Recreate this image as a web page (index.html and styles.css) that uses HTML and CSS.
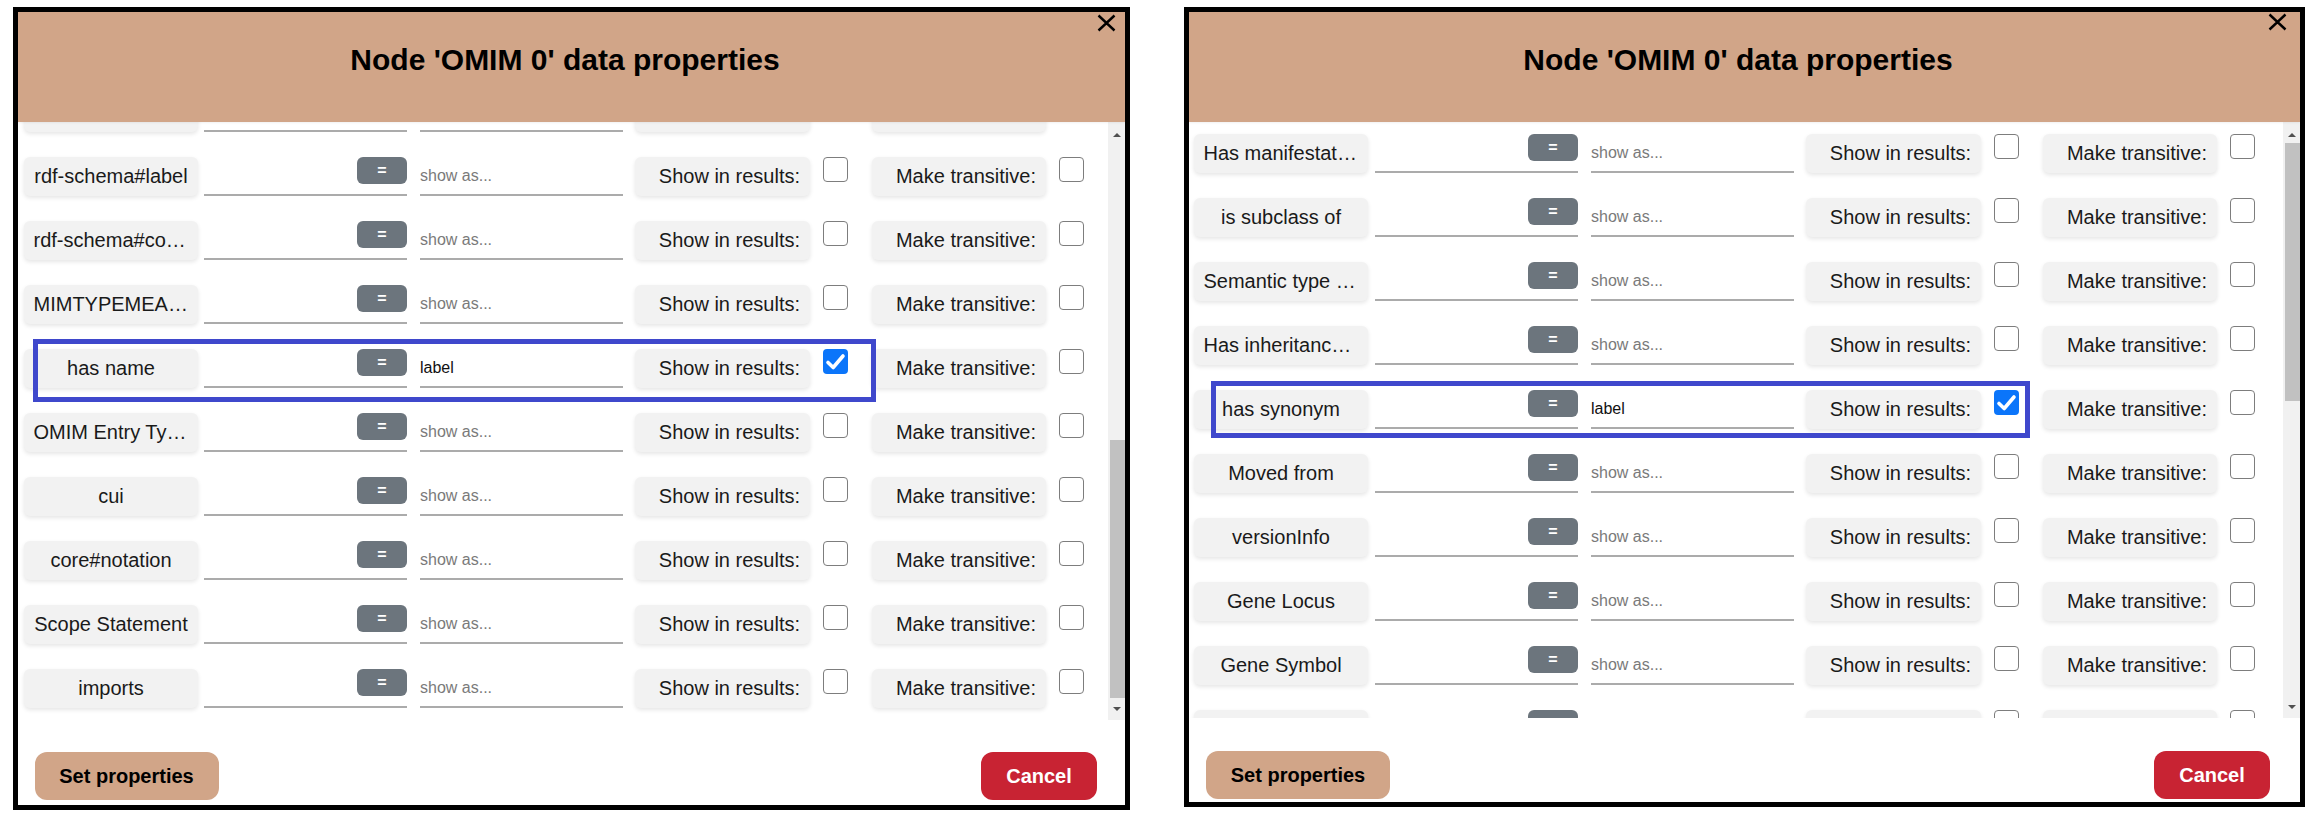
FILE: index.html
```html
<!DOCTYPE html>
<html lang="en">
<head>
<meta charset="utf-8">
<title>Node data properties</title>
<link rel="stylesheet" href="styles.css">
</head>
<body>
<div class="stage">

  <section class="dialog dialog--a">
    <header class="dialog-head">
      <h2 class="dialog-title">Node 'OMIM 0' data properties</h2>
      <button class="close-btn" aria-label="Close"><svg viewBox="0 0 19 18" width="19" height="18"><path d="M1.5 1.5 L17.5 16.5 M17.5 1.5 L1.5 16.5" stroke="#000" stroke-width="2.4" fill="none"/></svg></button>
    </header>
    <div class="dialog-body dialog-body--a">
      <div class="prop-list">
        <div class="rows rows--scrolled">
          <div class="prop-row prop-row--clipped"><span class="prop-name"></span><div class="cond"><input class="cond-input" type="text"><button class="eq-btn"></button></div><input class="show-as" type="text"><span class="opt opt--show"></span><span class="check check--a"></span><span class="opt opt--trans"></span><span class="check check--b"></span></div>
          <div class="prop-row"><span class="prop-name">rdf-schema#label</span><div class="cond"><input class="cond-input" type="text"><button class="eq-btn">=</button></div><input class="show-as" type="text" placeholder="show as..."><span class="opt opt--show">Show in results:</span><span class="check check--a"></span><span class="opt opt--trans">Make transitive:</span><span class="check check--b"></span></div>
          <div class="prop-row"><span class="prop-name">rdf-schema#comment</span><div class="cond"><input class="cond-input" type="text"><button class="eq-btn">=</button></div><input class="show-as" type="text" placeholder="show as..."><span class="opt opt--show">Show in results:</span><span class="check check--a"></span><span class="opt opt--trans">Make transitive:</span><span class="check check--b"></span></div>
          <div class="prop-row"><span class="prop-name">MIMTYPEMEANING</span><div class="cond"><input class="cond-input" type="text"><button class="eq-btn">=</button></div><input class="show-as" type="text" placeholder="show as..."><span class="opt opt--show">Show in results:</span><span class="check check--a"></span><span class="opt opt--trans">Make transitive:</span><span class="check check--b"></span></div>
          <div class="prop-row"><span class="prop-name">has name</span><div class="cond"><input class="cond-input" type="text"><button class="eq-btn">=</button></div><input class="show-as" type="text" placeholder="show as..." value="label"><span class="opt opt--show">Show in results:</span><span class="check check--a is-checked"><svg viewBox="0 0 25 25" width="25" height="25"><path d="M5 13.5 L10.2 18.5 L20 7" stroke="#fff" stroke-width="3.6" fill="none" stroke-linecap="round" stroke-linejoin="round"/></svg></span><span class="opt opt--trans">Make transitive:</span><span class="check check--b"></span></div>
          <div class="prop-row"><span class="prop-name">OMIM Entry Type</span><div class="cond"><input class="cond-input" type="text"><button class="eq-btn">=</button></div><input class="show-as" type="text" placeholder="show as..."><span class="opt opt--show">Show in results:</span><span class="check check--a"></span><span class="opt opt--trans">Make transitive:</span><span class="check check--b"></span></div>
          <div class="prop-row"><span class="prop-name">cui</span><div class="cond"><input class="cond-input" type="text"><button class="eq-btn">=</button></div><input class="show-as" type="text" placeholder="show as..."><span class="opt opt--show">Show in results:</span><span class="check check--a"></span><span class="opt opt--trans">Make transitive:</span><span class="check check--b"></span></div>
          <div class="prop-row"><span class="prop-name">core#notation</span><div class="cond"><input class="cond-input" type="text"><button class="eq-btn">=</button></div><input class="show-as" type="text" placeholder="show as..."><span class="opt opt--show">Show in results:</span><span class="check check--a"></span><span class="opt opt--trans">Make transitive:</span><span class="check check--b"></span></div>
          <div class="prop-row"><span class="prop-name">Scope Statement</span><div class="cond"><input class="cond-input" type="text"><button class="eq-btn">=</button></div><input class="show-as" type="text" placeholder="show as..."><span class="opt opt--show">Show in results:</span><span class="check check--a"></span><span class="opt opt--trans">Make transitive:</span><span class="check check--b"></span></div>
          <div class="prop-row"><span class="prop-name">imports</span><div class="cond"><input class="cond-input" type="text"><button class="eq-btn">=</button></div><input class="show-as" type="text" placeholder="show as..."><span class="opt opt--show">Show in results:</span><span class="check check--a"></span><span class="opt opt--trans">Make transitive:</span><span class="check check--b"></span></div>
        </div>
      </div>
      <div class="scrollbar">
        <div class="sb-btn sb-btn--up"><span class="tri tri--up"></span></div>
        <div class="sb-track"><div class="sb-thumb sb-thumb--a"></div></div>
        <div class="sb-btn sb-btn--down"><span class="tri tri--down"></span></div>
      </div>
    </div>
    <footer class="dialog-foot dialog-foot--a">
      <button class="btn btn-set">Set properties</button>
      <button class="btn btn-cancel">Cancel</button>
    </footer>
    <div class="mark mark--a"></div>
  </section>

  <section class="dialog dialog--b">
    <header class="dialog-head">
      <h2 class="dialog-title">Node 'OMIM 0' data properties</h2>
      <button class="close-btn close-btn--b" aria-label="Close"><svg viewBox="0 0 19 18" width="19" height="18"><path d="M1.5 1.5 L17.5 16.5 M17.5 1.5 L1.5 16.5" stroke="#000" stroke-width="2.4" fill="none"/></svg></button>
    </header>
    <div class="dialog-body dialog-body--b">
      <div class="prop-list">
        <div class="rows">
          <div class="prop-row"><span class="prop-name">Has manifestation</span><div class="cond"><input class="cond-input" type="text"><button class="eq-btn">=</button></div><input class="show-as" type="text" placeholder="show as..."><span class="opt opt--show">Show in results:</span><span class="check check--a"></span><span class="opt opt--trans">Make transitive:</span><span class="check check--b"></span></div>
          <div class="prop-row"><span class="prop-name">is subclass of</span><div class="cond"><input class="cond-input" type="text"><button class="eq-btn">=</button></div><input class="show-as" type="text" placeholder="show as..."><span class="opt opt--show">Show in results:</span><span class="check check--a"></span><span class="opt opt--trans">Make transitive:</span><span class="check check--b"></span></div>
          <div class="prop-row"><span class="prop-name">Semantic type UMLS property</span><div class="cond"><input class="cond-input" type="text"><button class="eq-btn">=</button></div><input class="show-as" type="text" placeholder="show as..."><span class="opt opt--show">Show in results:</span><span class="check check--a"></span><span class="opt opt--trans">Make transitive:</span><span class="check check--b"></span></div>
          <div class="prop-row"><span class="prop-name">Has inheritance type</span><div class="cond"><input class="cond-input" type="text"><button class="eq-btn">=</button></div><input class="show-as" type="text" placeholder="show as..."><span class="opt opt--show">Show in results:</span><span class="check check--a"></span><span class="opt opt--trans">Make transitive:</span><span class="check check--b"></span></div>
          <div class="prop-row"><span class="prop-name">has synonym</span><div class="cond"><input class="cond-input" type="text"><button class="eq-btn">=</button></div><input class="show-as" type="text" placeholder="show as..." value="label"><span class="opt opt--show">Show in results:</span><span class="check check--a is-checked"><svg viewBox="0 0 25 25" width="25" height="25"><path d="M5 13.5 L10.2 18.5 L20 7" stroke="#fff" stroke-width="3.6" fill="none" stroke-linecap="round" stroke-linejoin="round"/></svg></span><span class="opt opt--trans">Make transitive:</span><span class="check check--b"></span></div>
          <div class="prop-row"><span class="prop-name">Moved from</span><div class="cond"><input class="cond-input" type="text"><button class="eq-btn">=</button></div><input class="show-as" type="text" placeholder="show as..."><span class="opt opt--show">Show in results:</span><span class="check check--a"></span><span class="opt opt--trans">Make transitive:</span><span class="check check--b"></span></div>
          <div class="prop-row"><span class="prop-name">versionInfo</span><div class="cond"><input class="cond-input" type="text"><button class="eq-btn">=</button></div><input class="show-as" type="text" placeholder="show as..."><span class="opt opt--show">Show in results:</span><span class="check check--a"></span><span class="opt opt--trans">Make transitive:</span><span class="check check--b"></span></div>
          <div class="prop-row"><span class="prop-name">Gene Locus</span><div class="cond"><input class="cond-input" type="text"><button class="eq-btn">=</button></div><input class="show-as" type="text" placeholder="show as..."><span class="opt opt--show">Show in results:</span><span class="check check--a"></span><span class="opt opt--trans">Make transitive:</span><span class="check check--b"></span></div>
          <div class="prop-row"><span class="prop-name">Gene Symbol</span><div class="cond"><input class="cond-input" type="text"><button class="eq-btn">=</button></div><input class="show-as" type="text" placeholder="show as..."><span class="opt opt--show">Show in results:</span><span class="check check--a"></span><span class="opt opt--trans">Make transitive:</span><span class="check check--b"></span></div>
          <div class="prop-row prop-row--clipped"><span class="prop-name"></span><div class="cond"><input class="cond-input" type="text"><button class="eq-btn"></button></div><input class="show-as" type="text"><span class="opt opt--show"></span><span class="check check--a"></span><span class="opt opt--trans"></span><span class="check check--b"></span></div>
        </div>
      </div>
      <div class="scrollbar">
        <div class="sb-btn sb-btn--up"><span class="tri tri--up"></span></div>
        <div class="sb-track"><div class="sb-thumb sb-thumb--b"></div></div>
        <div class="sb-btn sb-btn--down"><span class="tri tri--down"></span></div>
      </div>
    </div>
    <footer class="dialog-foot dialog-foot--b">
      <button class="btn btn-set">Set properties</button>
      <button class="btn btn-cancel">Cancel</button>
    </footer>
    <div class="mark mark--b"></div>
  </section>

</div>
</body>
</html>
```
FILE: styles.css
```css
* { box-sizing: border-box; }

html, body {
  margin: 0;
  padding: 0;
  background: #fff;
}

body {
  font-family: "Liberation Sans", Arial, sans-serif;
  color: #1a1a1a;
  width: 2316px;
  height: 816px;
  overflow: hidden;
}

.stage {
  display: flex;
  align-items: flex-start;
  padding: 7px 0 0 13px;
  gap: 54px;
}

/* ---------- dialog ---------- */
.dialog {
  position: relative;
  display: flex;
  flex-direction: column;
  background: #fff;
  border: 5px solid #000;
}

.dialog--a { width: 1117px; }
.dialog--b { width: 1121px; }

.dialog-head {
  position: relative;
  height: 110px;
  background: #d1a588;
  padding: 31px 13px 0 0;
  box-shadow: 0 1px 2px rgba(0, 0, 0, 0.06);
  z-index: 2;
}

.dialog-title {
  margin: 0;
  text-align: center;
  font-size: 30px;
  font-weight: bold;
  color: #000;
  line-height: normal;
}

.close-btn {
  position: absolute;
  top: 2px;
  right: 9px;
  width: 19px;
  height: 18px;
  padding: 0;
  border: 0;
  background: transparent;
  display: block;
}

.close-btn svg { display: block; }

.close-btn--b { right: 13px; top: 1px; }

/* ---------- body / list ---------- */
.dialog-body {
  display: flex;
  overflow: hidden;
}

.dialog-body--a { height: 598px; }
.dialog-body--b { height: 596px; }

.prop-list {
  flex: 1;
  overflow: hidden;
  padding-top: 12px;
}

.rows--scrolled { margin-top: -41px; }

.prop-row {
  display: flex;
  align-items: flex-start;
  height: 39px;
  margin-bottom: 25px;
}

.prop-name {
  flex: none;
  width: 174px;
  height: 39px;
  margin-left: 6px;
  padding: 0 9.5px;
  background: #f2f2f2;
  border-radius: 6px;
  box-shadow: 0 2px 4px rgba(0, 0, 0, 0.1);
  font-size: 20px;
  line-height: 39px;
  text-align: center;
  white-space: nowrap;
  overflow: hidden;
  text-overflow: ellipsis;
  color: #1a1a1a;
}

.dialog--b .prop-name { margin-left: 5px; }

.cond {
  flex: none;
  display: flex;
  align-items: flex-start;
  width: 203px;
  height: 39px;
  margin-left: 6px;
  border-bottom: 2px solid #ababab;
}

.dialog--b .cond { margin-left: 7px; }

.cond-input {
  flex: 1;
  min-width: 0;
  height: 37px;
  border: 0;
  padding: 0;
  background: transparent;
  font-family: inherit;
  font-size: 16px;
  outline: none;
}

.eq-btn {
  flex: none;
  width: 50px;
  height: 27px;
  padding: 0;
  border: 0;
  border-radius: 6px;
  background: #6c757d;
  color: #fff;
  font-family: inherit;
  font-size: 16px;
  font-weight: bold;
  line-height: 25px;
  text-align: center;
}

.show-as {
  flex: none;
  width: 203px;
  height: 39px;
  margin: 0 0 0 13px;
  padding: 0;
  border: 0;
  border-bottom: 2px solid #ababab;
  border-radius: 0;
  background: transparent;
  font-family: inherit;
  font-size: 16px;
  color: #111;
  outline: none;
}

.show-as::placeholder { color: #7a7a7a; }

.opt {
  flex: none;
  height: 39px;
  padding-right: 10px;
  background: #f2f2f2;
  border-radius: 6px;
  box-shadow: 0 2px 4px rgba(0, 0, 0, 0.1);
  font-size: 20px;
  line-height: 39px;
  text-align: right;
  white-space: nowrap;
  color: #1a1a1a;
}

.opt--show { width: 175px; margin-left: 12px; }
.opt--trans { width: 174px; margin-left: 24.5px; }

.check {
  flex: none;
  display: block;
  width: 25px;
  height: 25px;
  border: 1px solid #7d7d7d;
  border-radius: 4px;
  background: #fff;
}

.check--a { margin-left: 12.5px; }
.check--b { margin-left: 12.5px; }

.check.is-checked {
  border: 0;
  background: #0b75fa;
}

.check svg { display: block; }

/* ---------- scrollbar ---------- */
.scrollbar {
  flex: none;
  width: 17px;
  display: flex;
  flex-direction: column;
  background: #f1f1f1;
}

.sb-btn {
  flex: none;
  height: 17px;
  display: flex;
  justify-content: center;
}

.sb-btn--up { align-items: flex-end; padding-bottom: 2px; }
.sb-btn--down { align-items: flex-start; padding-top: 4px; }

.tri {
  width: 0;
  height: 0;
  border-left: 4px solid transparent;
  border-right: 4px solid transparent;
}

.tri--up { border-bottom: 4px solid #505050; }
.tri--down { border-top: 4px solid #505050; }

.sb-track {
  flex: 1;
  position: relative;
}

.sb-thumb {
  margin-left: 2px;
  height: 258px;
  background: #c1c1c1;
}

.sb-thumb--a { margin-top: 301px; }
.sb-thumb--b { margin-top: 4px; }

/* ---------- footer ---------- */
.dialog-foot {
  display: flex;
  justify-content: space-between;
  align-items: flex-start;
}

.dialog-foot--a { height: 85px; padding: 32px 28px 0 16.5px; }
.dialog-foot--b { height: 84px; padding: 33px 30px 0 17px; }

.btn {
  height: 48px;
  padding: 0;
  border: 0;
  border-radius: 12px;
  font-family: inherit;
  font-size: 20px;
  font-weight: bold;
  white-space: nowrap;
  text-align: center;
}

.btn-set {
  width: 184px;
  background: #d1a588;
  color: #000;
}

.btn-cancel {
  width: 116px;
  background: #c82333;
  color: #fff;
}

/* ---------- highlight annotation ---------- */
.mark {
  position: absolute;
  border: 5px solid #3f48cc;
  pointer-events: none;
}

.mark--a { left: 15px; top: 327px; width: 843px; height: 63px; }
.mark--b { left: 22px; top: 369px; width: 819px; height: 57px; }
```
